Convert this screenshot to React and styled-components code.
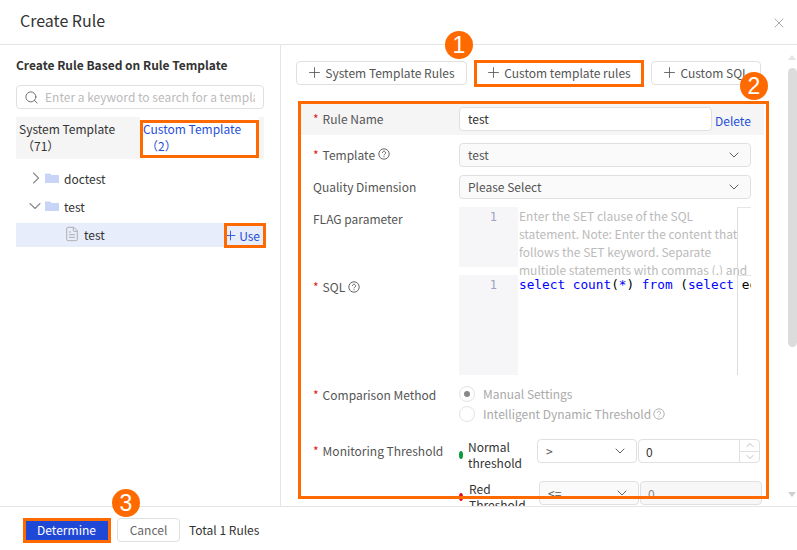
import styled, { createGlobalStyle } from "styled-components";
import { Search, Plus, ChevronRight, ChevronDown, ChevronUp, X, FileText } from "lucide-react";

const GlobalStyle = createGlobalStyle`
  html, body {
    margin: 0;
    padding: 0;
    background: #fff;
  }
  body {
    font-family: "Noto Sans CJK SC", "Noto Sans", sans-serif;
    font-size: 12px;
    color: #333;
  }
  * {
    box-sizing: border-box;
  }
`;

const Modal = styled.div`
  position: relative;
  width: 797px;
  height: 550px;
  overflow: hidden;
  display: flex;
  flex-direction: column;
`;

const Header = styled.div`
  height: 45px;
  flex: none;
  display: flex;
  align-items: center;
  justify-content: space-between;
  padding: 0 10px 5px 20px;
  border-bottom: 1px solid #e5e5e5;
  font-size: 16px;
  color: #333;
`;

const CloseIcon = styled(X)`
  color: #aaa;
  margin-top: 6px;
`;

const Body = styled.div`
  flex: 1;
  min-height: 0;
  display: flex;
`;

const Left = styled.div`
  width: 281px;
  flex: none;
  border-right: 1px solid #e5e5e5;
  padding: 11px 16px 0;
`;

const LeftTitle = styled.div`
  font-size: 12px;
  font-weight: 700;
  line-height: 18px;
  color: #333;
  margin-bottom: 11px;
`;

const SearchBox = styled.div`
  height: 24px;
  width: 248px;
  border: 1px solid #e0e0e0;
  border-radius: 4px;
  display: flex;
  align-items: center;
  gap: 6px;
  padding: 0 8px 0 7px;
  overflow: hidden;
  color: #666;
  svg {
    flex: none;
  }
  span {
    color: #bbb;
    white-space: nowrap;
    overflow: hidden;
    padding-bottom: 2px;
  }
`;

const Tabs = styled.div`
  display: flex;
  width: 248px;
  height: 42px;
  margin-top: 8px;
  background: #f5f5f5;
`;

const Tab = styled.div`
  width: ${(p) => p.$w}px;
  padding: 3px 3px;
  line-height: 17px;
  color: ${(p) => (p.$active ? "#1f4fd8" : "#333")};
  background: ${(p) => (p.$active ? "#fff" : "transparent")};
  i {
    display: block;
    font-style: normal;
    padding-left: 3px;
  }
`;

const Tree = styled.div`
  margin-top: 6px;
`;

const TreeRow = styled.div`
  height: ${(p) => (p.$selected ? "24px" : "28px")};
  margin-top: ${(p) => (p.$selected ? "2px" : "0")};
  display: flex;
  align-items: center;
  padding: 0 0 2px ${(p) => p.$indent}px;
  gap: ${(p) => (p.$selected ? 4 : 5)}px;
  font-size: 12px;
  background: ${(p) => (p.$selected ? "#e8edfb" : "transparent")};
  svg {
    flex: none;
  }
`;

const Twisty = styled.span`
  width: ${(p) => p.$w}px;
  margin-right: -3px;
  display: flex;
  justify-content: center;
  color: #888;
`;

const UseLink = styled.span`
  margin-left: auto;
  margin-top: 2px;
  display: flex;
  align-items: center;
  color: #1f4fd8;
  padding-right: 4px;
  gap: 1px;
`;

const Right = styled.div`
  flex: 1;
  min-width: 0;
  position: relative;
  padding: 16px 36px 0 15px;
  overflow: hidden;
`;

const Actions = styled.div`
  display: flex;
  gap: 8px;
  margin-bottom: 18px;
`;

const ActionButton = styled.div`
  height: 24px;
  width: ${(p) => p.$w}px;
  flex: none;
  border: 1px solid #e0e0e0;
  border-radius: 4px;
  display: flex;
  align-items: center;
  justify-content: center;
  gap: 2px;
  padding: 0 2px 2px 0;
  color: #555;
  white-space: nowrap;
`;

const Form = styled.div`
  width: 464px;
  margin-left: 4px;
`;

const NameRow = styled.div`
  display: flex;
  align-items: center;
  height: 32px;
  background: #f5f5f5;
  padding-left: 13px;
  margin-bottom: 8px;
`;

const Row = styled.div`
  display: flex;
  align-items: ${(p) => p.$align || "center"};
  padding-left: 13px;
  margin-bottom: ${(p) => p.$mb ?? 8}px;
`;

const Label = styled.div`
  width: 146px;
  flex: none;
  display: flex;
  align-items: center;
  gap: 3px;
  color: #555;
  padding-top: ${(p) => p.$pt || 0}px;
  padding-bottom: ${(p) => (p.$pt ? 0 : 2)}px;
  em {
    color: #e02020;
    font-style: normal;
    margin-right: 1px;
  }
`;

const Input = styled.div`
  width: 253px;
  height: 24px;
  background: #fff;
  border: 1px solid #e0e0e0;
  border-radius: 4px;
  display: flex;
  align-items: center;
  padding: 0 0 2px 8px;
`;

const DeleteLink = styled.span`
  color: #1f4fd8;
  margin: 2px 0 0 3px;
`;

const Select = styled.div`
  width: ${(p) => p.$w || 292}px;
  height: 24px;
  flex: none;
  background: ${(p) => (p.$plain ? "#fff" : "#fafafa")};
  border: 1px solid #e0e0e0;
  border-radius: 4px;
  display: flex;
  align-items: center;
  justify-content: space-between;
  padding: 0 8px;
  color: #555;
  span {
    padding-bottom: 2px;
  }
`;

const Editor = styled.div`
  position: relative;
  width: 292px;
  height: ${(p) => p.$h}px;
  flex: none;
  display: flex;
  overflow-x: clip;
`;

const Gutter = styled.div`
  width: 59px;
  flex: none;
  background: #f6f6f8;
  padding: 1px 21px 0 0;
  text-align: right;
  color: #a0a0c0;
  font-family: "DejaVu Sans Mono", monospace;
  font-size: 12px;
  line-height: 18px;
`;

const Placeholder = styled.div`
  width: 232px;
  height: 68px;
  overflow: hidden;
  flex: none;
  padding-left: 1px;
  color: #bbb;
  line-height: 18px;
`;

const Ruler = styled.div`
  position: absolute;
  left: 278px;
  top: 0;
  bottom: ${(p) => p.$bleed || 0}px;
  width: 14px;
  border-left: 1px solid #ddd;
  border-top: 1px solid #e5e5e5;
`;

const Code = styled.div`
  flex: none;
  padding: 1px 0 0 1px;
  font-family: "DejaVu Sans Mono", monospace;
  font-size: 12.76px;
  line-height: 18px;
  white-space: nowrap;
  color: #00f;
  b {
    font-weight: 400;
    color: #000;
  }
`;

const Radios = styled.div`
  display: flex;
  flex-direction: column;
  gap: 3px;
`;

const RadioRow = styled.div`
  display: flex;
  align-items: center;
  gap: 8px;
  height: 17px;
  color: #aaa;
`;

const RadioText = styled.span`
  display: flex;
  align-items: center;
  gap: 2px;
`;

const Radio = styled.span`
  width: 16px;
  height: 16px;
  border-radius: 50%;
  border: 1px solid #e3e3e3;
  background: #fff;
  display: flex;
  align-items: center;
  justify-content: center;
  &::after {
    content: "";
    display: ${(p) => (p.$on ? "block" : "none")};
    width: 6px;
    height: 6px;
    border-radius: 50%;
    background: #888;
  }
`;

const Threshold = styled.div`
  display: flex;
  align-items: center;
  height: 32px;
`;

const Dot = styled.span`
  width: 4px;
  height: 8px;
  border-radius: 50%;
  background: ${(p) => p.$c};
  margin: 8px ${(p) => p.$gap}px 0 0;
  flex: none;
`;

const ThresholdName = styled.div`
  width: ${(p) => p.$w}px;
  flex: none;
  margin-top: 8px;
  line-height: 16px;
  color: #333;
`;

const NumberInput = styled.div`
  width: 122px;
  height: 24px;
  flex: none;
  margin-left: 1px;
  border: 1px solid #e0e0e0;
  border-radius: 4px;
  display: flex;
  align-items: center;
  padding-left: 7px;
  background: ${(p) => (p.$muted ? "#f7f7f7" : "#fff")};
  color: ${(p) => (p.$muted ? "#888" : "#333")};
`;

const Stepper = styled.div`
  margin-left: auto;
  width: 20px;
  height: 100%;
  border-left: 1px solid #e0e0e0;
  display: flex;
  flex-direction: column;
  color: #999;
`;

const StepCell = styled.div`
  flex: 1;
  min-height: 0;
  display: flex;
  align-items: center;
  justify-content: center;
  & + & {
    border-top: 1px solid #e0e0e0;
  }
`;

const ScrollTrack = styled.div`
  position: absolute;
  right: 0;
  top: 7px;
  width: 10px;
  height: 445px;
`;

const ScrollThumb = styled.div`
  position: absolute;
  top: 16px;
  left: 1px;
  width: 9px;
  height: 279px;
  border-radius: 5px;
  background: #dcdcdc;
`;

const ScrollArrow = styled.div`
  position: absolute;
  left: 1px;
  ${(p) => (p.$down ? "bottom: 0;" : "top: 3px;")}
  width: 0;
  height: 0;
  border-left: 4.5px solid transparent;
  border-right: 4.5px solid transparent;
  ${(p) => (p.$down ? "border-top: 5px solid #cfcfcf;" : "border-bottom: 5px solid #e5e5e5;")}
`;

const Footer = styled.div`
  height: 44px;
  flex: none;
  border-top: 1px solid #e5e5e5;
  display: flex;
  align-items: center;
  padding: 3px 0 0 25px;
  gap: 9px;
`;

const Primary = styled.div`
  width: 83px;
  height: 24px;
  background: #1f48d6;
  color: #fff;
  display: flex;
  align-items: center;
  justify-content: center;
  padding-bottom: 2px;
`;

const Secondary = styled.div`
  width: 63px;
  height: 24px;
  border: 1px solid #e0e0e0;
  border-radius: 4px;
  display: flex;
  align-items: center;
  justify-content: center;
  padding-bottom: 2px;
  color: #666;
`;

const Total = styled.span`
  padding-bottom: 2px;
`;

const Mark = styled.div`
  position: absolute;
  left: ${(p) => p.$x}px;
  top: ${(p) => p.$y}px;
  width: ${(p) => p.$w}px;
  height: ${(p) => p.$h}px;
  border: 3px solid #ff6a00;
  pointer-events: none;
`;

const Badge = styled.div`
  position: absolute;
  left: ${(p) => p.$x - 14}px;
  top: ${(p) => p.$y - 14}px;
  width: 28px;
  height: 28px;
  border-radius: 50%;
  background: #ff6a00;
  color: #fff;
  font-family: "Liberation Sans", sans-serif;
  font-size: 23px;
  display: flex;
  align-items: center;
  justify-content: center;
`;

const HelpIcon = () => (
  <svg width="12" height="12" viewBox="0 0 12 12" fill="none" stroke="currentColor" strokeWidth="0.9">
    <circle cx="6" cy="6" r="5.2" />
    <path d="M4.4 4.8a1.6 1.6 0 1 1 2.4 1.4c-.5.3-.8.6-.8 1.2" />
    <path d="M6 8.4v1" />
  </svg>
);

const FolderIcon = () => (
  <svg width="14" height="10" viewBox="0 0 14 10">
    <path d="M0 0.5h5.2L6.6 2H14v8H0z" fill="#c9d5f7" />
  </svg>
);

const Caret = () => <ChevronDown size={16} strokeWidth={1.4} color="#555" />;
const AddIcon = () => <Plus size={17} strokeWidth={1.2} />;

export default function App() {
  return (
    <Modal>
      <GlobalStyle />
      <Header>
        <span>Create Rule</span>
        <CloseIcon size={16} strokeWidth={1.5} />
      </Header>
      <Body>
        <Left>
          <LeftTitle>Create Rule Based on Rule Template</LeftTitle>
          <SearchBox>
            <Search size={15} strokeWidth={1.5} />
            <span>Enter a keyword to search for a templa</span>
          </SearchBox>
          <Tabs>
            <Tab $w={124}>
              System Template
              <i>（71）</i>
            </Tab>
            <Tab $w={119} $active>
              Custom Template
              <i>（2）</i>
            </Tab>
          </Tabs>
          <Tree>
            <TreeRow $indent={13}>
              <Twisty $w={14}>
                <ChevronRight size={20} strokeWidth={1.3} />
              </Twisty>
              <FolderIcon />
              doctest
            </TreeRow>
            <TreeRow $indent={10}>
              <Twisty $w={17}>
                <ChevronDown size={20} strokeWidth={1.3} />
              </Twisty>
              <FolderIcon />
              test
            </TreeRow>
            <TreeRow $indent={48} $selected>
              <FileText size={16} strokeWidth={1.4} color="#aaa" />
              test
              <UseLink>
                <Plus size={15} strokeWidth={1.4} />
                Use
              </UseLink>
            </TreeRow>
          </Tree>
        </Left>
        <Right>
          <Actions>
            <ActionButton $w={171}>
              <AddIcon />
              System Template Rules
            </ActionButton>
            <ActionButton $w={168}>
              <AddIcon />
              Custom template rules
            </ActionButton>
            <ActionButton $w={110}>
              <AddIcon />
              Custom SQL
            </ActionButton>
          </Actions>
          <Form>
            <NameRow>
              <Label>
                <span>
                  <em>*</em>
                </span>
                Rule Name
              </Label>
              <Input>test</Input>
              <DeleteLink>Delete</DeleteLink>
            </NameRow>
            <Row>
              <Label>
                <span>
                  <em>*</em>
                </span>
                Template
                <HelpIcon />
              </Label>
              <Select>
                <span>test</span>
                <Caret />
              </Select>
            </Row>
            <Row>
              <Label>Quality Dimension</Label>
              <Select>
                <span>Please Select</span>
                <Caret />
              </Select>
            </Row>
            <Row $align="flex-start">
              <Label $pt={3}>FLAG parameter</Label>
              <Editor $h={60}>
                <Gutter>1</Gutter>
                <Placeholder>
                  Enter the SET clause of the SQL statement. Note: Enter the content that follows the SET keyword.
                  Separate multiple statements with commas (,) and
                </Placeholder>
                <Ruler $bleed={-8} />
              </Editor>
            </Row>
            <Row $align="flex-start" $mb={10}>
              <Label $pt={3}>
                <span>
                  <em>*</em>
                </span>
                SQL
                <HelpIcon />
              </Label>
              <Editor $h={100}>
                <Gutter>1</Gutter>
                <Code>
                  select count<b>(</b>*<b>)</b> from <b>(</b>select <b>ec</b>
                </Code>
                <Ruler />
              </Editor>
            </Row>
            <Row $align="flex-start" $mb={13}>
              <Label $pt={1}>
                <span>
                  <em>*</em>
                </span>
                Comparison Method
              </Label>
              <Radios>
                <RadioRow>
                  <Radio $on />
                  Manual Settings
                </RadioRow>
                <RadioRow>
                  <Radio />
                  <RadioText>
                    Intelligent Dynamic Threshold
                    <HelpIcon />
                  </RadioText>
                </RadioRow>
              </Radios>
            </Row>
            <Row $align="flex-start" $mb={10}>
              <Label $pt={7}>
                <span>
                  <em>*</em>
                </span>
                Monitoring Threshold
              </Label>
              <Threshold>
                <Dot $c="#0a9a3c" $gap={5} />
                <ThresholdName $w={69}>
                  Normal
                  <br />
                  threshold
                </ThresholdName>
                <Select $w={100} $plain>
                  <span>&gt;</span>
                  <Caret />
                </Select>
                <NumberInput>
                  0
                  <Stepper>
                    <StepCell>
                      <ChevronUp size={12} strokeWidth={1.3} />
                    </StepCell>
                    <StepCell>
                      <ChevronDown size={12} strokeWidth={1.3} />
                    </StepCell>
                  </Stepper>
                </NumberInput>
              </Threshold>
            </Row>
            <Row $align="flex-start">
              <Label />
              <Threshold>
                <Dot $c="#e00b1c" $gap={6} />
                <ThresholdName $w={70}>
                  Red
                  <br />
                  Threshold
                </ThresholdName>
                <Select $w={100}>
                  <span>&lt;=</span>
                  <Caret />
                </Select>
                <NumberInput $muted>0</NumberInput>
              </Threshold>
            </Row>
          </Form>
          <ScrollTrack>
            <ScrollArrow />
            <ScrollThumb />
            <ScrollArrow $down />
          </ScrollTrack>
        </Right>
      </Body>
      <Footer>
        <Primary>Determine</Primary>
        <Secondary>Cancel</Secondary>
        <Total>Total 1 Rules</Total>
      </Footer>

      <Mark $x={140} $y={120} $w={119} $h={38} />
      <Mark $x={224} $y={223} $w={42} $h={25} />
      <Mark $x={474} $y={60} $w={170} $h={27} />
      <Mark $x={298} $y={101} $w={471} $h={398} />
      <Mark $x={23} $y={518} $w={88} $h={25} />
      <Badge $x={459} $y={45}>1</Badge>
      <Badge $x={754} $y={86}>2</Badge>
      <Badge $x={126} $y={503}>3</Badge>
    </Modal>
  );
}
